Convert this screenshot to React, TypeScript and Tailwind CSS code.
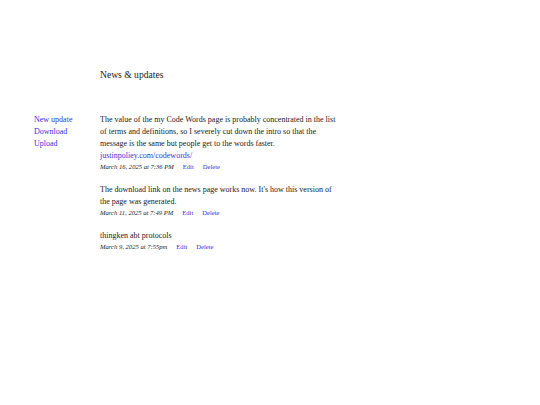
import React from "react";

const posts = [
  {
    text: "The value of the my Code Words page is probably concentrated in the list of terms and definitions, so I severely cut down the intro so that the message is the same but people get to the words faster.",
    link: "justinpoliey.com/codewords/",
    date: "March 16, 2025 at 7:36 PM",
  },
  {
    text: "The download link on the news page works now. It's how this version of the page was generated.",
    date: "March 11, 2025 at 7:49 PM",
  },
  {
    text: "thingken abt protocols",
    date: "March 9, 2025 at 7:55pm",
  },
];

export default function App() {
  return (
    <div
      className="w-[540px] h-[405px] bg-white text-[#222]"
      style={{ fontFamily: '"Liberation Serif", "Times New Roman", serif' }}
    >
      <div className="pt-[67px] pl-[100px] text-[9.6px] leading-[16px]">News &amp; updates</div>
      <div className="flex mt-[31px]">
        <div className="w-[100px] shrink-0 pl-[34px] flex flex-col text-[8px] leading-[12px] text-[#3333dd]">
          <a>New update</a>
          <a>Download</a>
          <a>Upload</a>
        </div>
        <div className="w-[241px] shrink-0 flex flex-col gap-[12px] text-[8px] leading-[12px]">
          {posts.map((p, i) => (
            <div key={i}>
              <div>{p.text}</div>
              {p.link && <div className="text-[#3333dd]">{p.link}</div>}
              <div className="text-[6.6px] leading-[10px] flex gap-[9px]">
                <span className="italic">{p.date}</span>
                <span className="text-[#3333dd]">Edit</span>
                <span className="text-[#3333dd]">Delete</span>
              </div>
            </div>
          ))}
        </div>
      </div>
    </div>
  );
}
